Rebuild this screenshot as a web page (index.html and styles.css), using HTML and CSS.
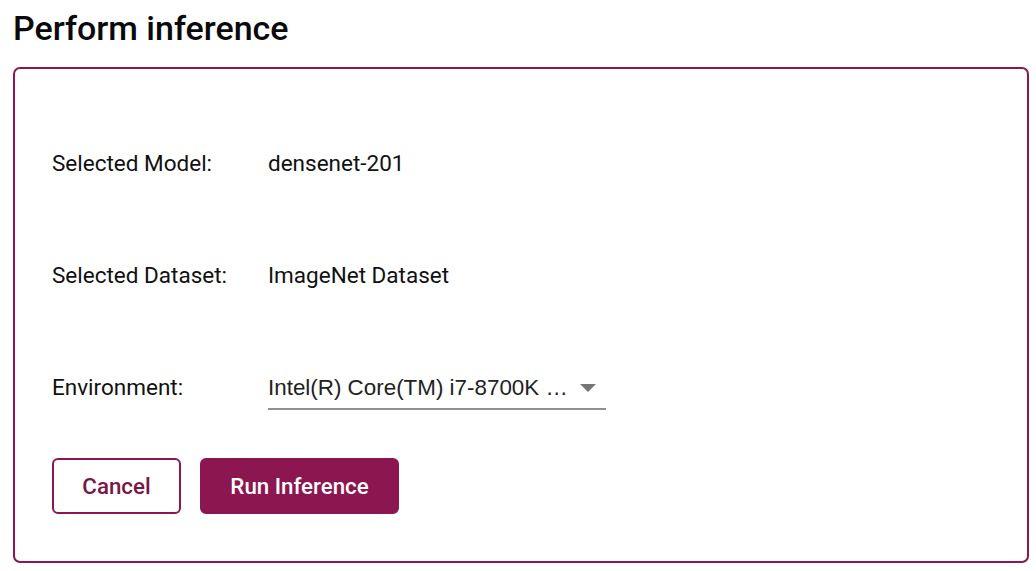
FILE: index.html
```html
<!DOCTYPE html>
<html>
<head>
<meta charset="utf-8">
<link rel="stylesheet" href="styles.css">
</head>
<body>
<h1 class="title">Perform inference</h1>
<section class="panel">
  <div class="rows">
    <div class="row">
      <span class="label">Selected Model:</span>
      <span class="value">densenet-201</span>
    </div>
    <div class="row">
      <span class="label">Selected Dataset:</span>
      <span class="value">ImageNet Dataset</span>
    </div>
    <div class="row">
      <span class="label">Environment:</span>
      <div class="select">
        <span class="select-text">Intel(R) Core(TM) i7-8700K …</span>
        <span class="arrow"></span>
      </div>
    </div>
  </div>
  <div class="actions">
    <button class="btn btn-outline">Cancel</button>
    <button class="btn btn-solid">Run Inference</button>
  </div>
</section>
</body>
</html>
```
FILE: styles.css
```css
html, body {
  margin: 0;
  padding: 0;
  background: #ffffff;
}
body {
  font-family: Roboto, "Liberation Sans", sans-serif;
  color: #111111;
  padding: 8px 7px 0 13px;
}
.title {
  margin: 0;
  font-size: 34px;
  font-weight: 500;
  line-height: 40px;
  color: #0a0a0a;
}
.panel {
  margin-top: 19px;
  border: 2px solid #8b1650;
  border-radius: 7px;
  padding: 81px 37px 46px 37px;
  height: 496px;
  box-sizing: border-box;
}
.rows {
  display: flex;
  flex-direction: column;
  gap: 86px;
}
.row {
  display: grid;
  grid-template-columns: 216px 338px;
  font-size: 22.5px;
  line-height: 26px;
}
.label, .value {
  color: #111111;
}
.select {
  position: relative;
  border-bottom: 2px solid #8f8f8f;
  padding-bottom: 8px;
  height: 26px;
}
.select-text {
  font-family: "Liberation Sans", Arial, sans-serif;
  font-size: 22.4px;
  line-height: 26px;
  color: #222222;
}
.arrow {
  position: absolute;
  right: 10px;
  top: 10px;
  width: 0;
  height: 0;
  border-left: 8px solid transparent;
  border-right: 8px solid transparent;
  border-top: 8px solid #767676;
}
.actions {
  display: flex;
  gap: 19px;
  margin-top: 48px;
}
.btn {
  height: 56px;
  border-radius: 6px;
  font-family: Roboto, "Liberation Sans", sans-serif;
  font-size: 22.3px;
  font-weight: 500;
  box-sizing: border-box;
  padding: 0;
  cursor: pointer;
}
.btn-outline {
  width: 129px;
  background: #ffffff;
  border: 2px solid #8b1650;
  color: #7a1547;
}
.btn-solid {
  width: 199px;
  background: #8b1650;
  border: 2px solid #8b1650;
  color: #ffffff;
}
```
